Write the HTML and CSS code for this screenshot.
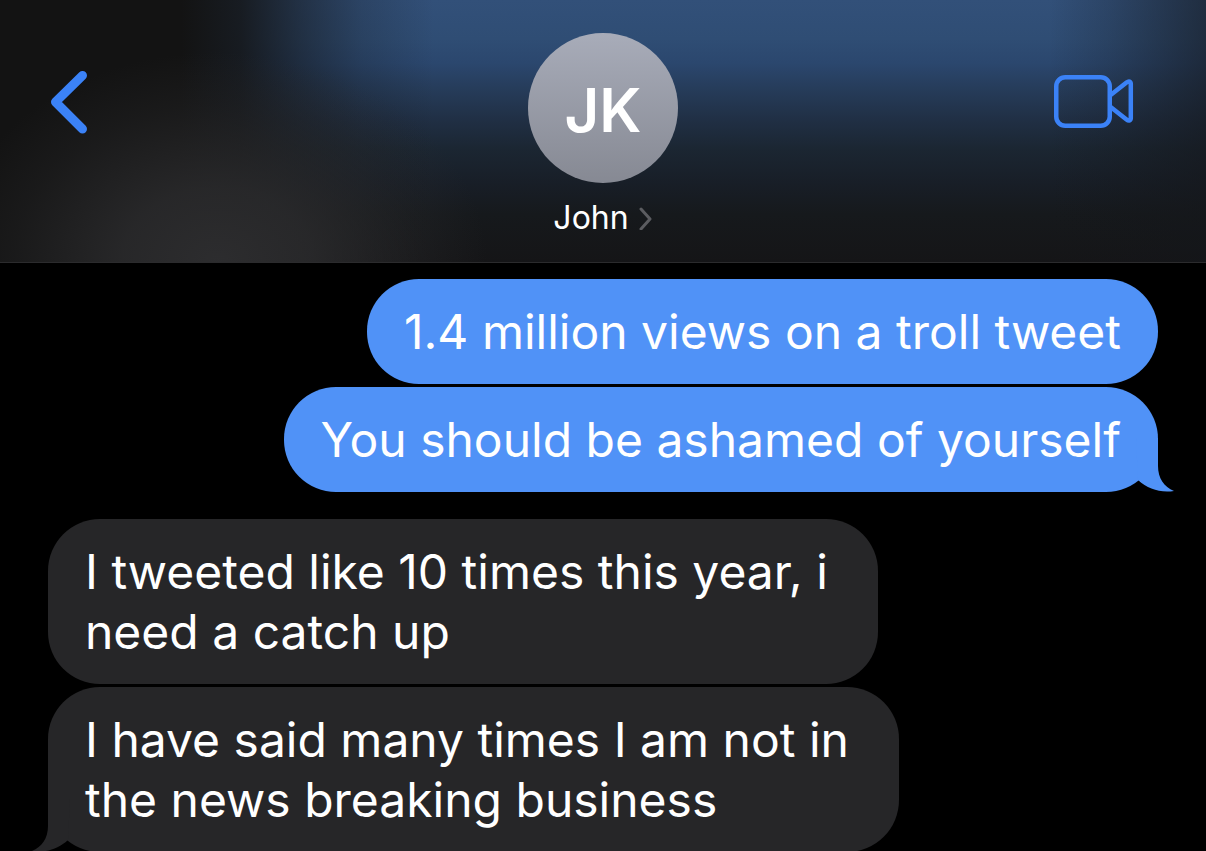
FILE: index.html
```html
<!DOCTYPE html>
<html lang="en">
<head>
    <meta charset="UTF-8">
    <meta name="viewport" content="width=device-width, initial-scale=1.0">
    <title>John</title>
    <link rel="stylesheet" href="styles.css">
</head>
<body>
    <div class="chat">
        <header class="header">
            <button type="button" class="icon-button back" aria-label="Back">
                <svg width="38" height="64" viewBox="0 0 38 64" fill="none" stroke="#3b82f7" stroke-width="9" stroke-linecap="round" stroke-linejoin="round">
                    <path d="M32.500 4.500L5.500 31L32.500 58"/>
                </svg>
            </button>

            <button type="button" class="contact">
                <span class="avatar">JK</span>
                <span class="name">John
                    <svg width="14" height="24" viewBox="0 0 14 24" fill="none" stroke="#5b5c60" stroke-width="3" stroke-linecap="round" stroke-linejoin="round">
                        <path d="M2 3L11 13L2 23"/>
                    </svg>
                </span>
            </button>

            <button type="button" class="icon-button video" aria-label="Video call">
                <svg width="80" height="54" viewBox="0 0 80 54" fill="none" stroke="#3b82f7" stroke-width="4.500" stroke-linejoin="round">
                    <rect x="2.250" y="2.250" width="53.500" height="48.500" rx="9"/>
                    <path d="M56 20.500L72.500 7.500C75 5.500 76.800 6.500 76.800 9V43C76.800 45.500 75 46.500 72.500 44.500L56 31.500"/>
                </svg>
            </button>
        </header>

        <main class="thread">
            <!-- Outgoing -->
            <div class="group sent">
                <p class="bubble">1.4 million views on a troll tweet</p>
                <p class="bubble">You should be ashamed of yourself
                    <svg class="tail" width="38" height="54" viewBox="0 0 38 54">
                        <path d="M0 0H22V28C22 40 28 49 38 53C24 55 12 51 2 42Z"/>
                    </svg>
                </p>
            </div>

            <!-- Incoming -->
            <div class="group received">
                <p class="bubble">I tweeted like 10 times this year, i<br>need a catch up</p>
                <p class="bubble">I have said many times I am not in<br>the news breaking business
                    <svg class="tail" width="38" height="54" viewBox="0 0 38 54">
                        <path d="M0 0H22V28C22 40 28 49 38 53C24 55 12 51 2 42Z"/>
                    </svg>
                </p>
            </div>
        </main>
    </div>
</body>
</html>
```
FILE: styles.css
```css
* {
    box-sizing: border-box;
}

body {
    margin: 0;
    background-color: #000000;
    color: #ffffff;
    font-family: Inter, "Liberation Sans", sans-serif;
}

.chat {
    height: 100vh;
    overflow: hidden;
}

/* Top bar, with the blurred wallpaper behind it */
.header {
    display: grid;
    grid-template-columns: 1fr auto 1fr;
    align-items: start;
    padding: 33px 50px 24px;
    border-bottom: 1px solid #2b2b2d;
    background:
        radial-gradient(ellipse 270px 210px at 18% 100%, rgba(46, 46, 48, 0.95), rgba(46, 46, 48, 0.75) 35%, rgba(46, 46, 48, 0.25) 75%, rgba(46, 46, 48, 0)),
        linear-gradient(to right, #131313 0%, #131313 15%, rgba(19, 19, 19, 0.85) 20%, rgba(19, 19, 19, 0.5) 25%, rgba(19, 19, 19, 0.2) 30%, rgba(19, 19, 19, 0) 36%),
        linear-gradient(to left, rgba(20, 22, 26, 0.6), rgba(20, 22, 26, 0.2) 8%, rgba(20, 22, 26, 0) 13%),
        linear-gradient(to bottom, #325079 0%, #2f4d74 15%, #2b476e 24%, #263c5a 34%, #202f44 46%, #1b2632 57%, #181e27 70%, #16191c 82%, #151517 100%);
}

button {
    margin: 0;
    padding: 0;
    border: none;
    background: none;
    color: inherit;
    font-family: inherit;
    cursor: pointer;
}

button svg {
    display: block;
}

.icon-button {
    margin-top: 38px;
}

.back {
    justify-self: start;
}

.video {
    justify-self: end;
    margin-top: 42px;
    margin-right: 22px;
}

.contact {
    display: flex;
    flex-direction: column;
    align-items: center;
    gap: 15px;
}

.avatar {
    display: flex;
    align-items: center;
    justify-content: center;
    width: 150px;
    height: 150px;
    padding-top: 4px;
    border-radius: 50%;
    background: linear-gradient(to bottom, #a8acb9, #868993);
    font-size: 60px;
    font-weight: 600;
}

.name {
    display: flex;
    align-items: center;
    gap: 10px;
    font-size: 32px;
    line-height: 40px;
}

/* Messages */
.thread {
    display: flex;
    flex-direction: column;
    gap: 27px;
    padding: 16px 48px 0;
}

.group {
    display: flex;
    flex-direction: column;
    gap: 3px;
}

.sent {
    align-items: flex-end;
}

.received {
    align-items: flex-start;
}

.bubble {
    position: relative;
    margin: 0;
    padding: 23px 37px 22px;
    border-radius: 52px;
    font-size: 48px;
    line-height: 60px;
}

.sent .bubble {
    background-color: #5092f7;
    fill: #5092f7;
}

.received .bubble {
    padding-right: 50px;
    background-color: #262628;
    fill: #262628;
}

.tail {
    position: absolute;
    right: -16px;
    bottom: 0;
}

.received .tail {
    right: auto;
    left: -16px;
    transform: scaleX(-1);
}
```
